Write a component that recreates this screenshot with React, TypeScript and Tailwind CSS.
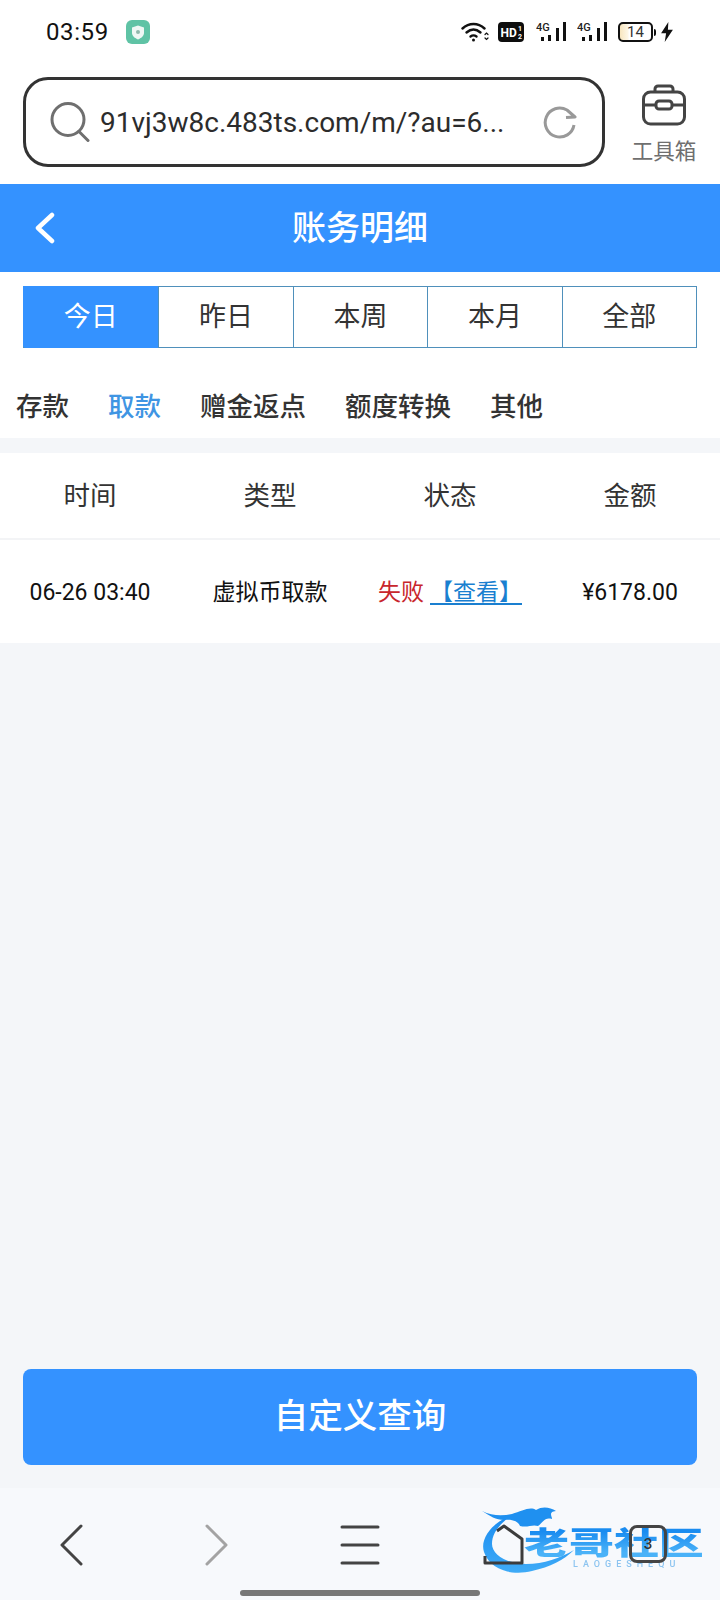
const cjk = "font-['Roboto','Noto_Sans_CJK_SC',sans-serif]";

const ranges = ["今日", "昨日", "本周", "本月", "全部"];
const kinds = ["存款", "取款", "赠金返点", "额度转换", "其他"];
const columns = ["时间", "类型", "状态", "金额"];

function Signal() {
  return (
    <svg width="30" height="24" viewBox="0 0 30 24">
      <text x="0" y="10.500" fontSize="11" fontWeight="500" fontFamily="Roboto" fill="#222">4G</text>
      <rect x="5" y="17" width="3" height="4" fill="#111" />
      <rect x="12" y="15" width="3" height="6" fill="#111" />
      <rect x="20" y="8" width="3" height="13" fill="#111" />
      <rect x="27" y="2" width="3" height="19" fill="#111" />
    </svg>
  );
}

function StatusBar() {
  return (
    <div className="flex h-[64px] items-center pr-[46px] pl-[46px]">
      <span className="font-['Roboto',sans-serif] text-[24px] tracking-[0.6px] text-[#111]">03:59</span>
      <span className="ml-[17px] flex h-[24px] w-[24px] items-center justify-center rounded-[6px] bg-[#5fc3a5]">
        <svg width="14" height="15" viewBox="0 0 14 15">
          <path d="M7 0.5 13 2.5V8c0 3-3 5.200-6 6.500C4 13.200 1 11 1 8V2.500Z" fill="#eef7f4" />
          <circle cx="7" cy="7" r="2" fill="#8fb8ac" />
        </svg>
      </span>
      <div className="ml-auto flex items-center">
        <svg width="28" height="22" viewBox="0 0 28 22" fill="none" stroke="#111" strokeWidth="2.400" strokeLinecap="round">
          <path d="M1.500 7.500C8 1.500 17 1.500 23.500 7.500" />
          <path d="M5.500 11.500C10 7.500 15 7.500 19.500 11.500" />
          <path d="M9.500 15.500C11.500 14 13.500 14 15.500 15.500" />
          <circle cx="12.500" cy="19" r="1.500" fill="#111" stroke="none" />
          <path d="M24 13.500l1.500-1.500 1.500 1.500M24 17l1.500 1.500 1.500-1.500" strokeWidth="1.200" />
        </svg>
        <svg width="26" height="20" viewBox="0 0 26 20" className="ml-[9px]">
          <rect width="26" height="20" rx="4" fill="#0d0d0d" />
          <text x="2.500" y="15" fontSize="12" fontWeight="700" fontFamily="Roboto" fill="#fff">HD</text>
          <text x="20" y="9" fontSize="7" fontWeight="700" fontFamily="Roboto" fill="#fff">1</text>
          <text x="20" y="17" fontSize="7" fontWeight="700" fontFamily="Roboto" fill="#fff">2</text>
        </svg>
        <div className="ml-[12px]"><Signal /></div>
        <div className="ml-[11px]"><Signal /></div>
        <div className="ml-[11px] flex h-[20px] w-[35px] items-center justify-center rounded-[5px] border-2 border-[#111] bg-[linear-gradient(90deg,#f8e6bf_0%,#fdf6e6_25%,#ffffff_30%)]">
          <span className="font-['Roboto',sans-serif] text-[15px] leading-none text-[#333]">14</span>
        </div>
        <span className="ml-[1px] h-[7px] w-[2px] rounded-r-sm bg-[#111]" />
        <svg width="14" height="20" viewBox="0 0 14 22" className="ml-[4px]">
          <path d="M8.500 0 0.500 12.500H6L4.500 22 13.500 8.500H8Z" fill="#111" />
        </svg>
      </div>
    </div>
  );
}

function BrowserBar() {
  return (
    <div className="flex h-[120px] items-start pt-[13px] pl-[23px]">
      <div className="flex h-[90px] w-[582px] items-center rounded-[25px] border-[3px] border-[#333] pl-[24px]">
        <svg width="40" height="40" viewBox="0 0 40 40" fill="none" className="shrink-0">
          <circle cx="18" cy="17.500" r="16" stroke="#6f6f6f" strokeWidth="3" />
          <path d="M29 29.500 38 38.500" stroke="#6f6f6f" strokeWidth="3" strokeLinecap="round" />
        </svg>
        <span className="mt-[2px] ml-[10px] font-['Roboto',sans-serif] text-[28px] whitespace-nowrap text-[#2c2c2c]">
          91vj3w8c.483ts.com/m/?au=6...
        </span>
        <svg width="34" height="34" viewBox="0 0 34 34" fill="none" className="mr-[25px] ml-auto shrink-0">
          <path d="M31 20A14.500 14.500 0 1 1 24 5L32 12 23 12.500" stroke="#999" strokeWidth="3" strokeLinejoin="round" />
        </svg>
      </div>
      <div className="ml-[27px] flex w-[64px] flex-col items-center">
        <svg width="44" height="42" viewBox="0 0 44 42" fill="none" stroke="#444" strokeWidth="3" className="mt-[7px]">
          <path d="M13 8V5a3 3 0 0 1 3-3h12a3 3 0 0 1 3 3v3" />
          <rect x="1.500" y="8" width="41" height="32" rx="7" />
          <path d="M2 21h12M30 21h12" />
          <rect x="14" y="17" width="16" height="8" rx="3" />
        </svg>
        <span className="mt-[9px] font-['Noto_Sans_CJK_SC',sans-serif] text-[21.500px] leading-[30px] whitespace-nowrap text-[#6f6f6f]">工具箱</span>
      </div>
    </div>
  );
}

function Records() {
  return (
    <div className={cjk}>
      <div className="relative flex h-[88px] items-center justify-center bg-[#3492ff]">
        <svg width="22" height="32" viewBox="0 0 22 32" fill="none" className="absolute top-[28px] left-[33px]">
          <path d="M19 3 5 16l14 13" stroke="#fff" strokeWidth="4.500" strokeLinecap="round" strokeLinejoin="round" />
        </svg>
        <h1 className="text-[34px] font-medium text-white">账务明细</h1>
      </div>

      <div className="mx-[23px] mt-[14px] grid h-[62px] grid-cols-5 border border-[#4f90bb]">
        {ranges.map((r, i) => (
          <div
            key={r}
            className={
              i === 0
                ? "-m-px mr-0 flex items-center justify-center rounded-bl-[3px] bg-[#3492ff] text-[27px] text-white"
                : "flex items-center justify-center border-l border-[#4f90bb] text-[27px] text-[#333]"
            }
          >
            {r}
          </div>
        ))}
      </div>

      <div className="flex h-[90px] items-center gap-[39px] pt-[28px] pl-[16px]">
        {kinds.map((k, i) => (
          <span
            key={k}
            className={`text-[26.500px] font-medium ${i === 1 ? "text-[#3f95e3]" : "text-[#333]"}`}
          >
            {k}
          </span>
        ))}
      </div>

      <div className="border-t-[15px] border-[#f4f6f9] bg-white">
        <div className="grid h-[87px] grid-cols-4 items-center border-b-2 border-[#f3f4f6] text-center text-[26.500px] text-[#333]">
          {columns.map((c) => (
            <span key={c}>{c}</span>
          ))}
        </div>
        <div className="grid h-[103px] grid-cols-4 items-center pt-[3px] text-center text-[23px] text-[#111]">
          <span>06-26 03:40</span>
          <span>虚拟币取款</span>
          <span className="whitespace-nowrap">
            <span className="text-[#c8262c]">失败</span>
            <span className="ml-[6px] text-[#1a7fd0] underline underline-offset-[3px]">【查看】</span>
          </span>
          <span>¥6178.00</span>
        </div>
      </div>
    </div>
  );
}

function Watermark() {
  return (
    <div className="absolute top-[16px] left-[482px] h-[72px] w-[225px] blur-[0.5px]">
      <svg width="225" height="72" viewBox="0 0 225 72" fill="none" className="absolute top-0 left-0">
        <defs>
          <linearGradient id="swoosh" x1="0" y1="0" x2="0" y2="1">
            <stop offset="0" stopColor="#1a8cf0" />
            <stop offset="1" stopColor="#3fabf7" />
          </linearGradient>
        </defs>
        <path d="M28 12C8 20-2 36 2 48 8 66 30 72 50 67 68 63 82 56 92 46 78 54 62 60 44 60 24 60 10 50 10 40 10 30 16 22 28 12Z" fill="url(#swoosh)" />
        <path d="M0 7C10 12 20 12 30 10 40 7 48 2 54 6 60 2 68 3 74 7 66 8 70 12 70 15 62 13 62 18 56 22 50 20 46 24 38 22 36 17 30 15 22 16 14 16 8 12 0 7Z" fill="#1f90f0" />
      </svg>
      <span className="absolute top-[14px] left-[42px] origin-left scale-x-[1.45] bg-[linear-gradient(180deg,#1a8cf0_30%,#4ab2f8_75%)] bg-clip-text font-['Noto_Sans_CJK_SC',sans-serif] text-[31px] leading-[46px] font-black whitespace-nowrap text-transparent">
        老哥社区
      </span>
      <span className="absolute top-[54px] left-[91px] font-['Roboto',sans-serif] text-[9px] leading-[12px] font-medium tracking-[5px] whitespace-nowrap text-[#8cc4f0]">
        LAOGESHEQU
      </span>
    </div>
  );
}

function BottomNav() {
  return (
    <div className="relative flex h-[112px] items-start bg-[#f7f9fc] pt-[36px]">
      <Watermark />
      <div className="relative grid w-full grid-cols-5 justify-items-center">
        <svg width="24" height="42" viewBox="0 0 24 42" fill="none" stroke="#444" strokeWidth="3" strokeLinecap="round" strokeLinejoin="round">
          <path d="M21 2 2 21l19 19" />
        </svg>
        <svg width="24" height="42" viewBox="0 0 24 42" fill="none" stroke="#a3a3a3" strokeWidth="3" strokeLinecap="round" strokeLinejoin="round">
          <path d="M3 2l19 19L3 40" />
        </svg>
        <svg width="40" height="42" viewBox="0 0 40 42" fill="none" stroke="#444" strokeWidth="3" strokeLinecap="round">
          <path d="M2 3h36M2 21h36M2 39h36" />
        </svg>
        <svg width="42" height="42" viewBox="0 0 42 42" fill="none" stroke="#3c3c3c" strokeWidth="3" strokeLinejoin="round">
          <path d="M14 7 21 2 39 15V39H2V32" />
        </svg>
        <div className="mt-[1px] flex h-[38px] w-[38px] items-center justify-center rounded-[8px] border-[3px] border-[#444] font-['Roboto',sans-serif] text-[15px] font-medium text-[#333]">
          3
        </div>
      </div>
      <div className="absolute bottom-[4px] left-[240px] h-[6px] w-[240px] rounded-full bg-[#777]" />
    </div>
  );
}

export default function App() {
  return (
    <div className="flex h-[1600px] w-[720px] flex-col overflow-hidden bg-white">
      <StatusBar />
      <BrowserBar />
      <Records />
      <div className="flex flex-1 flex-col justify-end bg-[#f4f6f9] px-[23px] pb-[23px]">
        <button className={`h-[96px] rounded-[8px] bg-[#3492ff] text-[34.500px] font-medium text-white ${cjk}`}>
          自定义查询
        </button>
      </div>
      <BottomNav />
    </div>
  );
}
